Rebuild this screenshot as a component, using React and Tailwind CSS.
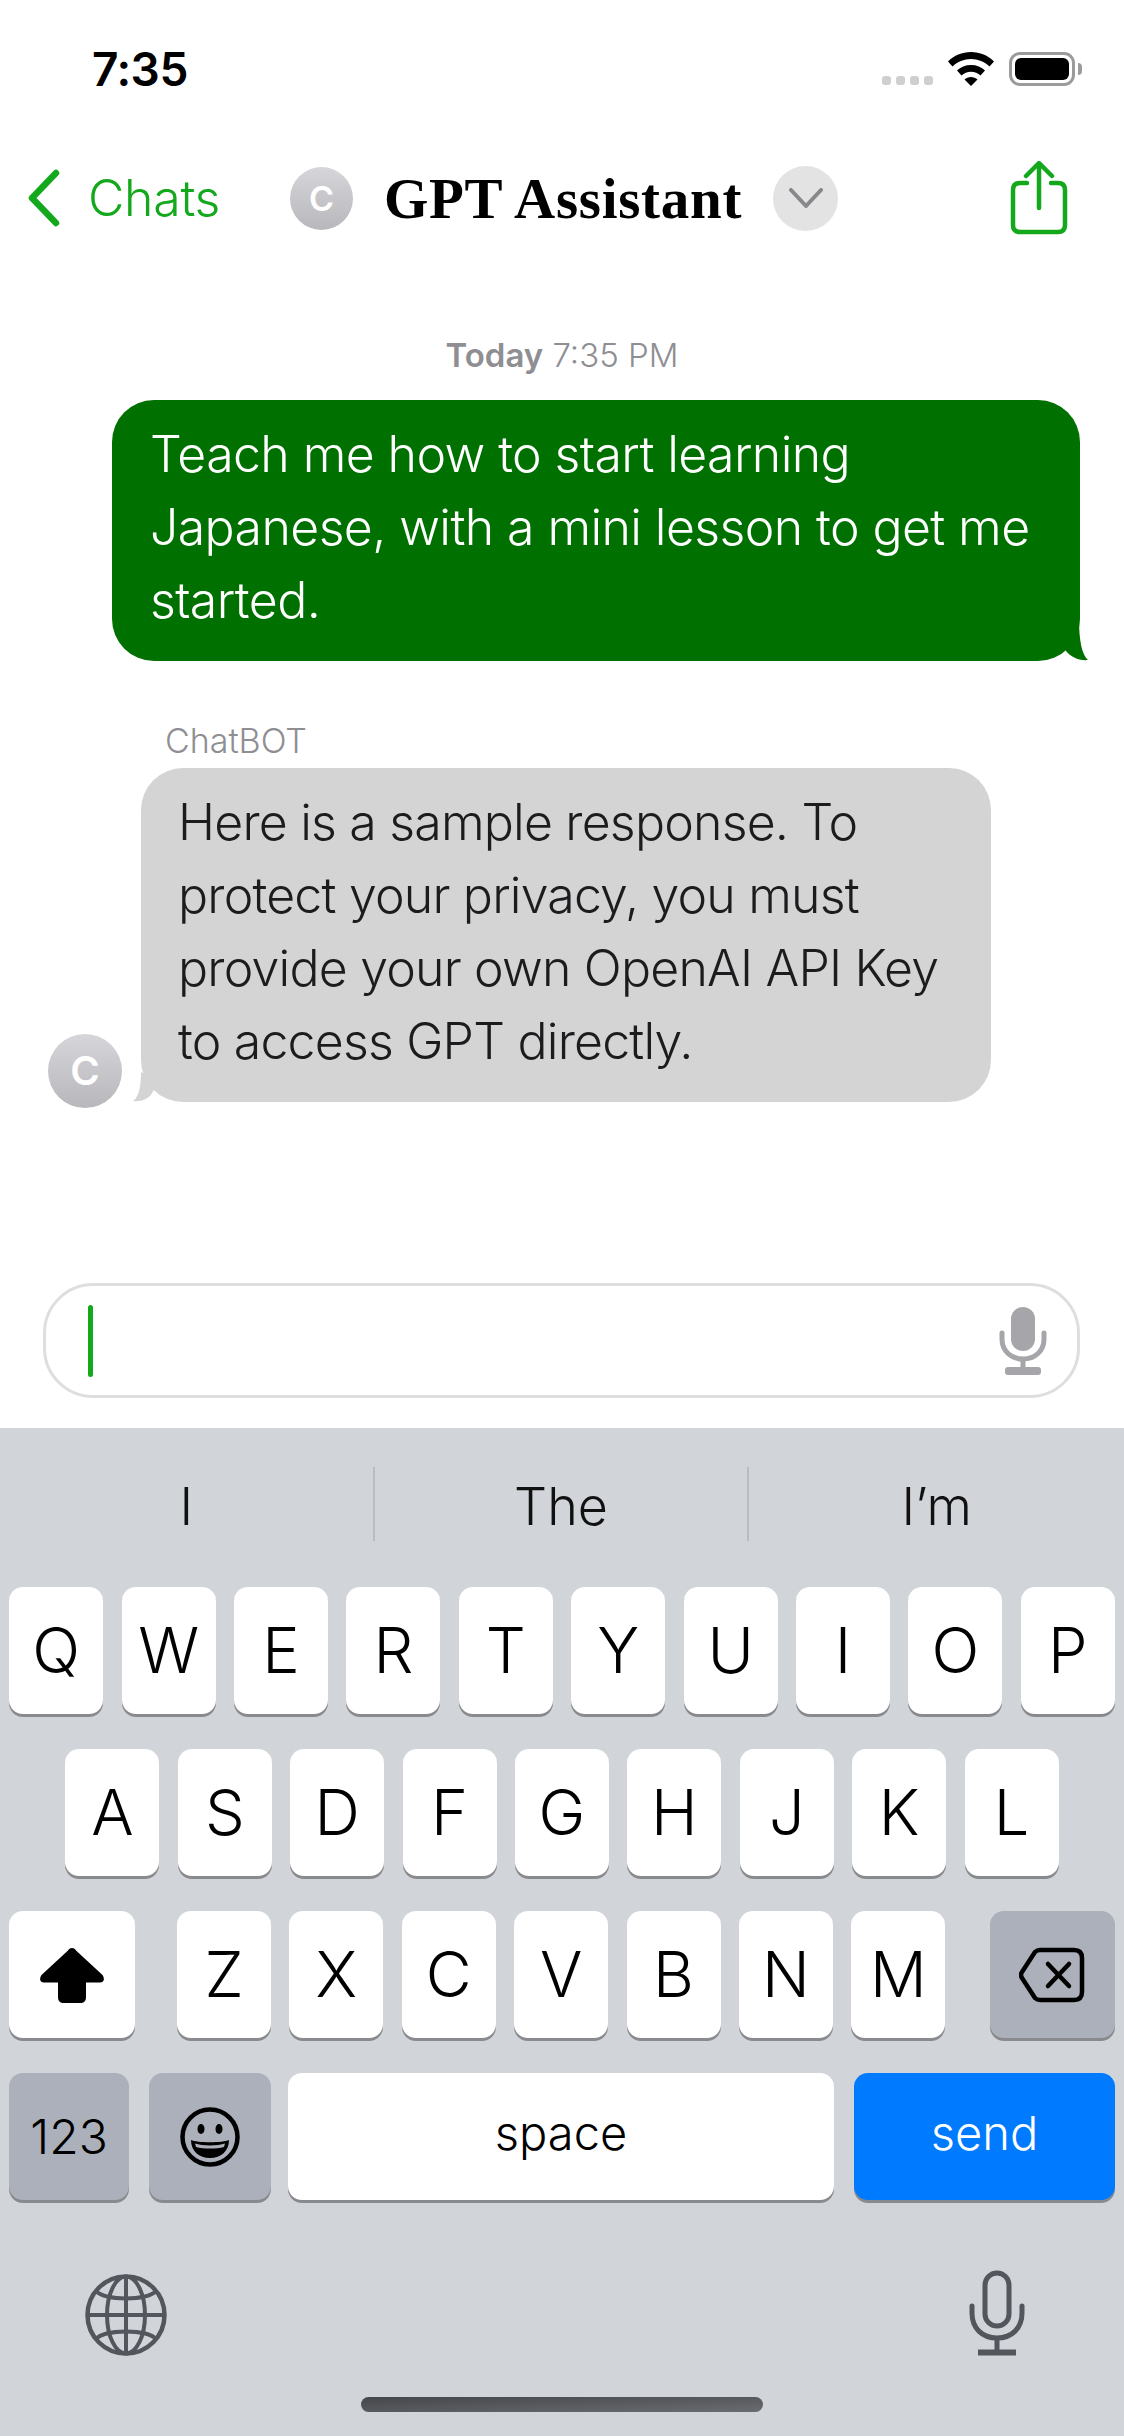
import React from 'react';

const sans = "font-['Inter',sans-serif]";

const Key = ({ label }) => (
  <div className="w-[94px] h-[127px] rounded-[14px] bg-white shadow-[0_3px_0_#898a8d] flex items-center justify-center text-[63px] leading-none font-[350] text-black">
    {label}
  </div>
);

const Avatar = ({ sizeClass, textClass }) => (
  <div className={`${sizeClass} ${textClass} rounded-full bg-gradient-to-b from-[#d6d6da] to-[#b8b8bc] flex items-center justify-center font-semibold text-white shrink-0`}>
    C
  </div>
);

const BackChevron = () => (
  <svg width="36" height="58" viewBox="0 0 36 58" fill="none">
    <path d="M30 4 L6 29 L30 54" stroke="#14a81c" strokeWidth="6.5" strokeLinecap="round" strokeLinejoin="round" />
  </svg>
);

const ShareIcon = () => (
  <svg width="58" height="74" viewBox="0 0 58 74" fill="none" stroke="#14a81c" strokeWidth="4.5" strokeLinecap="round" strokeLinejoin="round">
    <path d="M17 22 H10 Q3 22 3 29 V64 Q3 71 10 71 H48 Q55 71 55 64 V29 Q55 22 48 22 H41" />
    <path d="M29 47 V3 M16 15 L29 2 L42 15" />
  </svg>
);

const Wifi = () => (
  <svg width="46" height="34" viewBox="0 0 46 34" fill="#000">
    <path d="M23 0 C32 0 40 3.500 46 9.500 L41.500 14.500 C36.500 9.800 30 7 23 7 C16 7 9.500 9.800 4.500 14.500 L0 9.500 C6 3.500 14 0 23 0 Z" />
    <path d="M23 13 C28.500 13 33.500 15 37 18.500 L32.500 23.500 C30 21.200 26.700 19.800 23 19.800 C19.300 19.800 16 21.200 13.500 23.500 L9 18.500 C12.500 15 17.500 13 23 13 Z" />
    <path d="M23 25 C25.500 25 27.800 26 29.500 27.500 L23 34 L16.500 27.500 C18.200 26 20.500 25 23 25 Z" />
  </svg>
);

const Battery = () => (
  <div className="flex items-center gap-[3px]">
    <div className="w-[66px] h-[34px] rounded-[11px] border-[3px] border-[#9b9b9b] p-[3px]">
      <div className="w-full h-full rounded-[6px] bg-black" />
    </div>
    <div className="w-[4px] h-[12px] rounded-r-full bg-[#9b9b9b]" />
  </div>
);

const SmallMic = () => (
  <svg width="48" height="68" viewBox="0 0 48 68" fill="none">
    <rect x="12" y="0" width="24" height="44" rx="12" fill="#a5a5aa" />
    <path d="M3 26 V32 C3 44 12 52 24 52 C36 52 45 44 45 32 V26" stroke="#a5a5aa" strokeWidth="5" strokeLinecap="round" />
    <path d="M24 52 V62" stroke="#a5a5aa" strokeWidth="5" />
    <rect x="6" y="60" width="36" height="8" rx="3" fill="#a5a5aa" />
  </svg>
);

const ShiftIcon = () => (
  <svg width="64" height="56" viewBox="0 0 64 56" fill="#000">
    <path d="M32 1 C30 1 29 2 28 3.500 L1.500 28 C-1 32 0 35.500 4 35.500 L18 35.500 V50 C18 54 20 56 24 56 H40 C44 56 46 54 46 50 V35.500 H60 C64 35.500 65 32 62.500 28 L36 3.500 C35 2 34 1 32 1 Z" />
  </svg>
);

const DeleteIcon = () => (
  <svg width="66" height="56" viewBox="0 0 66 56" fill="none" stroke="#000" strokeWidth="4.500" strokeLinecap="round" strokeLinejoin="round">
    <path d="M21 3 H55 Q63 3 63 11 V45 Q63 53 55 53 H21 Q18 53 16 51 L3 31 Q1 28 3 25 L16 5 Q18 3 21 3 Z" />
    <path d="M29 17 L50 39 M50 17 L29 39" />
  </svg>
);

const EmojiIcon = () => (
  <svg width="60" height="60" viewBox="0 0 60 60" fill="none">
    <circle cx="30" cy="30" r="27.500" stroke="#000" strokeWidth="4.500" />
    <ellipse cx="21" cy="22" rx="3.500" ry="5" fill="#000" />
    <ellipse cx="39" cy="22" rx="3.500" ry="5" fill="#000" />
    <path d="M11 33 C17 36 43 36 49 33 C49 44 41 51 30 51 C19 51 11 44 11 33 Z" fill="#000" />
    <path d="M15 36.500 C22 39 38 39 45 36.500 L44 40 C36 42 24 42 16 40 Z" fill="#abb0ba" />
  </svg>
);

const GlobeIcon = () => (
  <svg width="82" height="82" viewBox="0 0 82 82" fill="none" stroke="#53565c" strokeWidth="4">
    <circle cx="41" cy="41" r="38.500" strokeWidth="4.500" />
    <ellipse cx="41" cy="41" rx="19" ry="38.500" />
    <path d="M41 3 V79 M3 41 H79" />
    <path d="M11 17 C20 27 62 27 71 17 M11 65 C20 55 62 55 71 65" />
  </svg>
);

const BottomMic = () => (
  <svg width="56" height="86" viewBox="0 0 56 86" fill="none" stroke="#53565c" strokeWidth="5">
    <rect x="16" y="3" width="24" height="53" rx="12" />
    <path d="M3 36 V43 C3 58 13 68 28 68 C43 68 53 58 53 43 V36" strokeLinecap="round" />
    <path d="M28 68 V80" />
    <path d="M9 82.500 H47" strokeWidth="6" />
  </svg>
);

const App = () => {
  return (
    <div className={`${sans} w-[1124px] h-[2436px] bg-white flex flex-col overflow-hidden`}>
      {/* Status bar */}
      <div className="h-[138px] shrink-0 flex items-center justify-between pl-[92px] pr-[42px]">
        <span className="text-[46px] leading-none font-semibold text-black tracking-[-0.5px]">7:35</span>
        <div className="flex items-end gap-[15px]">
          <div className="flex gap-[5px] mb-[1px]">
            <div className="w-[9px] h-[9px] rounded-[3px] bg-[#cfcfcf]" />
            <div className="w-[9px] h-[9px] rounded-[3px] bg-[#cfcfcf]" />
            <div className="w-[9px] h-[9px] rounded-[3px] bg-[#cfcfcf]" />
            <div className="w-[9px] h-[9px] rounded-[3px] bg-[#cfcfcf]" />
          </div>
          <Wifi />
          <Battery />
        </div>
      </div>

      {/* Nav bar */}
      <div className="h-[120px] shrink-0 flex items-center pl-[26px] pr-[56px]">
        <BackChevron />
        <span className="ml-[26px] w-[202px] text-[50px] leading-none font-[350] text-[#14a81c] tracking-[-0.3px]">Chats</span>
        <Avatar sizeClass="w-[63px] h-[63px]" textClass="text-[34px]" />
        <span className="ml-[31px] w-[389px] text-[57px] leading-none font-bold tracking-[0.7px] text-black font-['Liberation_Serif',serif]">GPT Assistant</span>
        <div className="w-[65px] h-[65px] rounded-full bg-[#e3e3e3] flex items-center justify-center">
          <svg width="34" height="20" viewBox="0 0 34 20" fill="none">
            <path d="M2 2 L17 18 L32 2" stroke="#87878c" strokeWidth="4" strokeLinecap="round" strokeLinejoin="round" />
          </svg>
        </div>
        <div className="ml-auto"><ShareIcon /></div>
      </div>

      {/* Messages */}
      <div className="flex-1 flex flex-col pt-[77px]">
        <div className="h-[41px] text-center text-[33px] leading-[40px] text-[#8e8e93]">
          <span className="font-semibold">Today</span> <span className="font-light">7:35 PM</span>
        </div>
        <div className="relative ml-[112px] mt-[24px] w-[968px] rounded-[42px] bg-[#007000] pl-[38px] pr-[30px] pt-[18px] pb-[24px] text-[50px] leading-[73px] tracking-[-0.6px] text-white font-[350]">
          Teach me how to start learning<br />Japanese, with a mini lesson to get me<br />started.
          <svg className="absolute right-[-9px] bottom-0" width="40" height="42" viewBox="0 0 40 42" fill="#007000">
            <path d="M30 0 C30 22 33 36 39 41 C30 42 22 38 17 32 L8 12 Z" />
          </svg>
        </div>
        <div className="ml-[165px] mt-[60px] h-[40px] text-[34px] leading-[40px] text-[#8e8e93] font-light">ChatBOT</div>
        <div className="flex items-end mt-[7px] ml-[48px]">
          <Avatar sizeClass="w-[74px] h-[74px] mb-[-6px]" textClass="text-[40px]" />
          <div className="relative ml-[19px] w-[850px] rounded-[42px] bg-[#d4d4d5] pl-[37px] pr-[30px] pt-[18px] pb-[24px] text-[50px] leading-[73px] tracking-[-0.8px] text-[#1c1c1e] font-[350]">
            Here is a sample response. To<br />protect your privacy, you must<br />provide your own OpenAI API Key<br />to access GPT directly.
            <svg className="absolute left-[-8px] bottom-0" width="30" height="30" viewBox="0 0 30 30" fill="#d4d4d5">
              <path d="M8 0 C8 14 6 25 0 29 C8 30 14 27 18 23 L26 8 Z" />
            </svg>
          </div>
        </div>
      </div>

      {/* Input */}
      <div className="shrink-0 pb-[30px] pl-[43px] pr-[44px]">
        <div className="h-[115px] rounded-[50px] border-[3px] border-[#dedede] flex items-center justify-between pl-[42px] pr-[30px]">
          <div className="w-[5px] h-[72px] rounded-full bg-[#14a81c]" />
          <SmallMic />
        </div>
      </div>

      {/* Keyboard */}
      <div className="h-[1008px] shrink-0 bg-[#d1d4d9] flex flex-col">
        <div className="h-[159px] shrink-0 grid grid-cols-3 items-center pb-[7px] text-[52px] leading-none font-[350] text-[#111]">
          <div className="h-[74px] pt-[5px] flex items-center justify-center border-r-[2px] border-[#b9bcc1]">I</div>
          <div className="h-[74px] pt-[5px] flex items-center justify-center border-r-[2px] border-[#b9bcc1]">The</div>
          <div className="h-[74px] pt-[5px] flex items-center justify-center">I’m</div>
        </div>

        <div className="flex justify-center gap-[18.4px] h-[127px] shrink-0">
          {['Q', 'W', 'E', 'R', 'T', 'Y', 'U', 'I', 'O', 'P'].map((k) => <Key key={k} label={k} />)}
        </div>
        <div className="flex justify-center gap-[18.4px] h-[127px] shrink-0 mt-[35px]">
          {['A', 'S', 'D', 'F', 'G', 'H', 'J', 'K', 'L'].map((k) => <Key key={k} label={k} />)}
        </div>
        <div className="flex px-[9px] gap-[18.4px] h-[127px] shrink-0 mt-[35px]">
          <div className="w-[126px] mr-[23.600px] rounded-[14px] bg-white shadow-[0_3px_0_#898a8d] flex items-center justify-center">
            <ShiftIcon />
          </div>
          {['Z', 'X', 'C', 'V', 'B', 'N', 'M'].map((k) => <Key key={k} label={k} />)}
          <div className="w-[125px] ml-[26.200px] rounded-[14px] bg-[#abb0ba] shadow-[0_3px_0_#898a8d] flex items-center justify-center">
            <DeleteIcon />
          </div>
        </div>
        <div className="flex px-[9px] h-[127px] shrink-0 mt-[35px]">
          <div className="w-[120px] rounded-[14px] bg-[#abb0ba] shadow-[0_3px_0_#898a8d] flex items-center justify-center text-[48px] leading-none font-[350] text-black">123</div>
          <div className="w-[122px] ml-[20px] rounded-[14px] bg-[#abb0ba] shadow-[0_3px_0_#898a8d] flex items-center justify-center"><EmojiIcon /></div>
          <div className="w-[546px] ml-[17px] rounded-[14px] bg-white shadow-[0_3px_0_#898a8d] flex items-center justify-center text-[47px] leading-none font-[350] text-black pb-[8px]">space</div>
          <div className="w-[261px] ml-[20px] rounded-[14px] bg-[#007aff] shadow-[0_3px_0_#898a8d] flex items-center justify-center text-[47px] leading-none font-[350] text-white pb-[8px]">send</div>
        </div>

        <div className="flex justify-between items-end pl-[85px] pr-[99px] mt-[70px]">
          <GlobeIcon />
          <BottomMic />
        </div>
        <div className="mt-[41px] mx-auto w-[402px] h-[15px] rounded-full bg-gradient-to-br from-[#45474b] to-[#6b6c70]" />
      </div>
    </div>
  );
};

export default App;
